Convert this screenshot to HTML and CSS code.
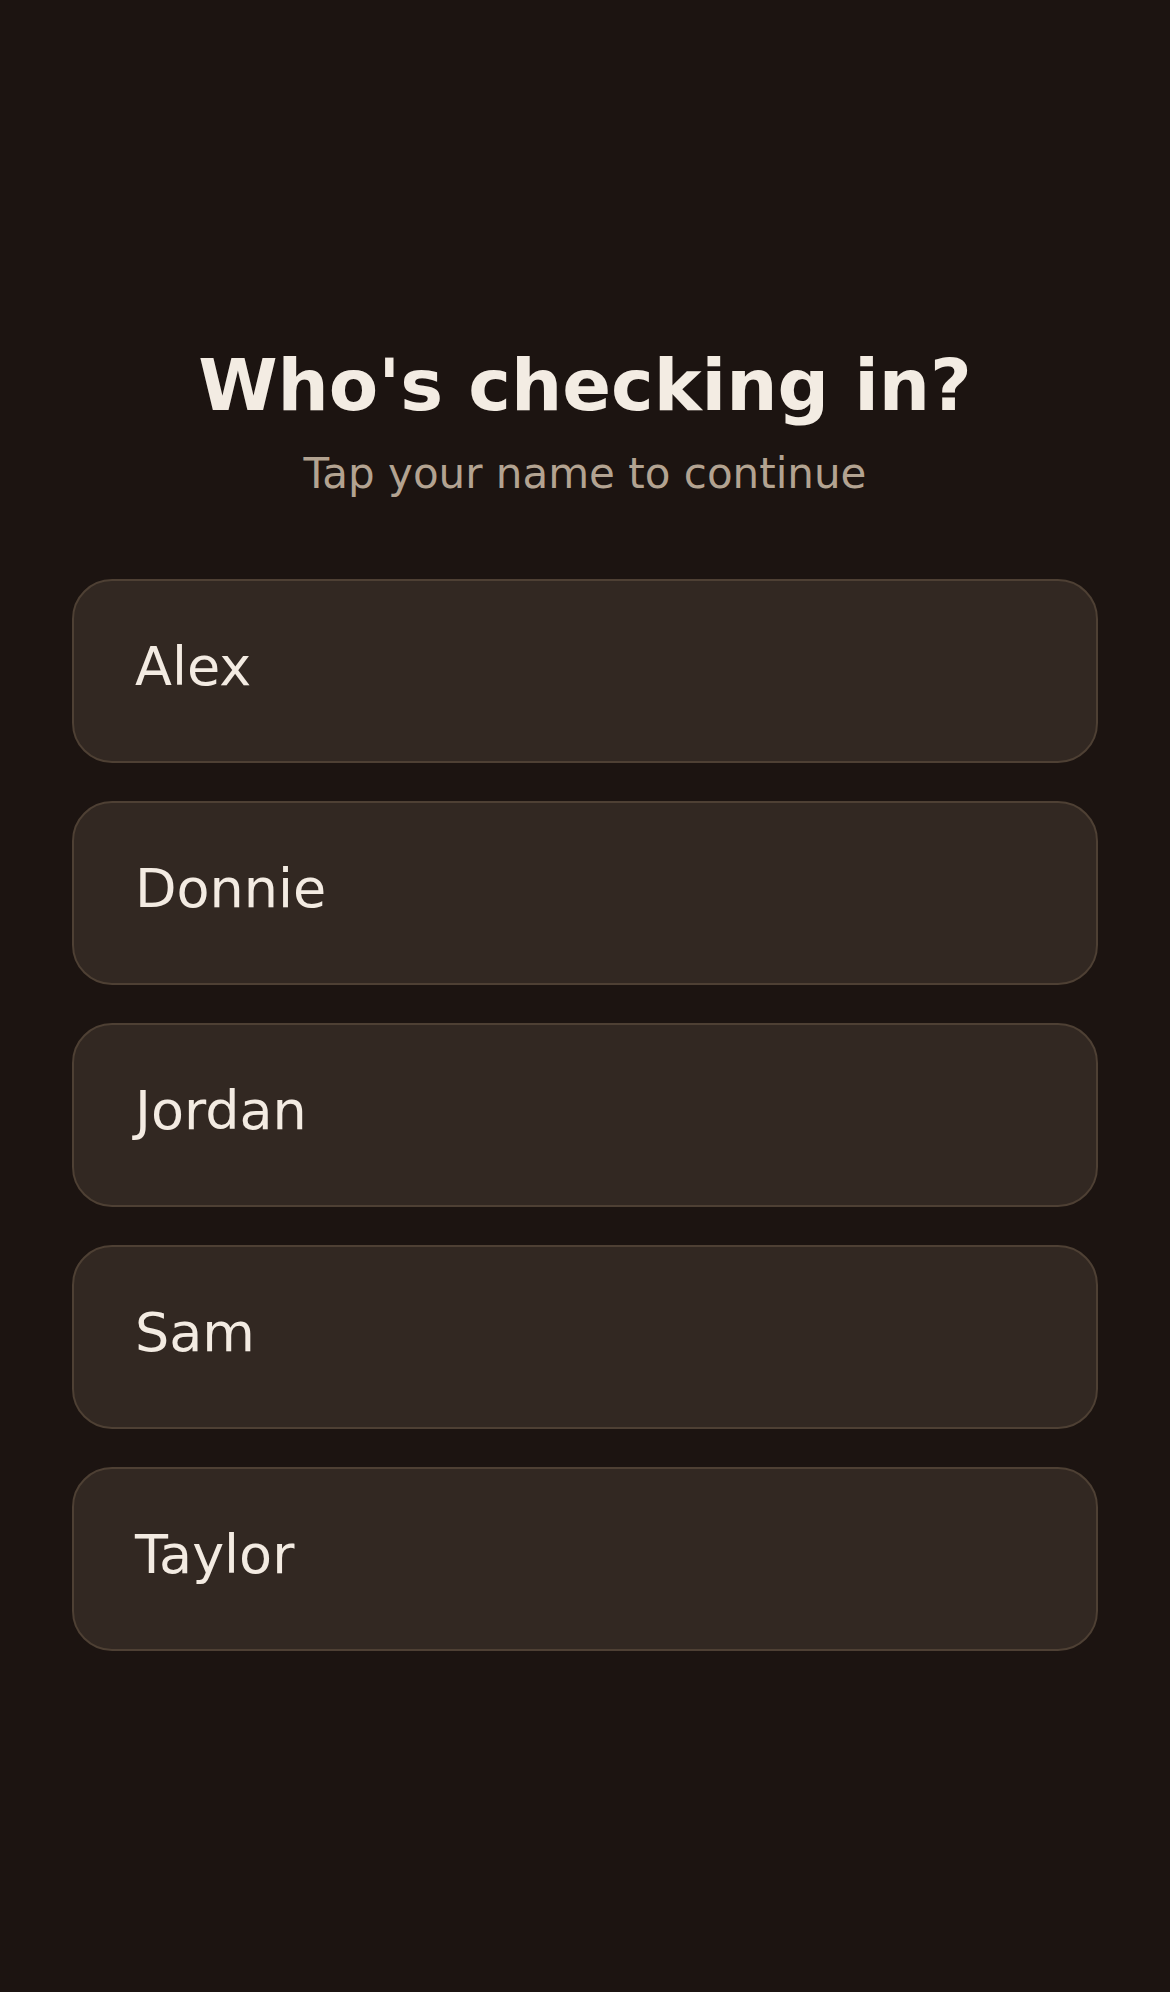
FILE: index.html
```html
<!DOCTYPE html>
<html>
	<head>
		<meta charset="utf-8">
		<title>Check in</title>
		<link rel="stylesheet" href="styles.css">
	</head>
	<body>
		<div class="checkin">
			<h1 class="title">Who's checking in?</h1>
			<p class="subtitle">Tap your name to continue</p>
			<ul class="people">
				<li class="person">Alex</li>
				<li class="person">Donnie</li>
				<li class="person">Jordan</li>
				<li class="person">Sam</li>
				<li class="person">Taylor</li>
			</ul>
		</div>
	</body>
</html>
```
FILE: styles.css
```css
*{
	margin: 0;
	padding: 0;
	box-sizing: border-box;
}
body{
	background-color: #1c1411;
	font-family: "DejaVu Sans", Verdana, sans-serif;
	color: #f3ebe2;
}
.checkin{
	min-height: 100vh;
	width: 1026px;
	margin: 0 auto;
	padding-top: 3px;
	display: flex;
	flex-direction: column;
	justify-content: center;
	align-items: center;
}
.title{
	font-size: 72px;
	font-weight: bold;
	line-height: 1.164;
	color: #f3ece3;
	text-align: center;
}
.subtitle{
	margin-top: 22px;
	font-size: 42px;
	line-height: 1.164;
	color: #b3a391;
	text-align: center;
}
.people{
	margin-top: 80px;
	width: 100%;
	list-style: none;
	display: flex;
	flex-direction: column;
	gap: 38px;
}
.person{
	height: 184px;
	display: flex;
	align-items: center;
	padding: 0 62px 8px 61px;
	font-size: 54px;
	background-color: #322822;
	border: 2px solid #4e4034;
	border-radius: 40px;
	cursor: pointer;
}
```
